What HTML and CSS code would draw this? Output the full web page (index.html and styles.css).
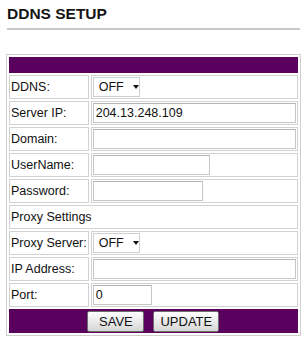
FILE: index.html
```html
<!DOCTYPE html>
<html>
<head>
<meta charset="utf-8">
<link rel="stylesheet" href="styles.css">
</head>
<body>
<div class="page">
  <h1 class="title">DDNS SETUP</h1>
  <table class="setup">
    <tr><td colspan="2" class="bar head"></td></tr>
    <tr>
      <td class="lbl">DDNS:</td>
      <td class="val"><div class="select">OFF<span class="arrow"></span></div></td>
    </tr>
    <tr>
      <td class="lbl">Server IP:</td>
      <td class="val"><div class="input full">204.13.248.109</div></td>
    </tr>
    <tr>
      <td class="lbl">Domain:</td>
      <td class="val"><div class="input full"></div></td>
    </tr>
    <tr>
      <td class="lbl">UserName:</td>
      <td class="val"><div class="input user"></div></td>
    </tr>
    <tr>
      <td class="lbl">Password:</td>
      <td class="val"><div class="input pass"></div></td>
    </tr>
    <tr>
      <td colspan="2" class="lbl section">Proxy Settings</td>
    </tr>
    <tr>
      <td class="lbl">Proxy Server:</td>
      <td class="val"><div class="select">OFF<span class="arrow"></span></div></td>
    </tr>
    <tr>
      <td class="lbl">IP Address:</td>
      <td class="val"><div class="input full"></div></td>
    </tr>
    <tr>
      <td class="lbl">Port:</td>
      <td class="val"><div class="input port">0</div></td>
    </tr>
    <tr>
      <td colspan="2" class="bar foot">
        <div class="buttons">
          <button class="btn save">SAVE</button>
          <button class="btn update">UPDATE</button>
        </div>
      </td>
    </tr>
  </table>
</div>
</body>
</html>
```

FILE: styles.css
```css
html, body {
  margin: 0;
  padding: 0;
  background: #ffffff;
}

.page {
  padding: 0 8px 0 6px;
  font-family: "Liberation Sans", Arial, sans-serif;
  color: #111;
}

.title {
  margin: 0 0 0 1px;
  padding: 7px 0 7px 0;
  font-size: 15.5px;
  font-weight: bold;
  line-height: 14px;
  color: #151515;
  border-bottom: 2px solid #c8c8c8;
}

.setup {
  margin-top: 24px;
  width: 293px;
  border: 1px solid #cfcfcf;
  border-spacing: 2px;
  font-size: 12.5px;
}

.setup td {
  box-sizing: border-box;
  border: 1px solid #d2d2d2;
  padding: 0 1px;
  height: 24px;
  vertical-align: middle;
}

.setup td.lbl {
  width: 80px;
  white-space: nowrap;
}

.setup td.bar {
  background: #5a005e;
  border-color: #5a005e;
}

.setup td.head {
  height: 16px;
}

.setup td.foot {
  height: 24px;
  padding: 0;
}

.setup td.section {
  width: auto;
}

.input {
  box-sizing: border-box;
  height: 20px;
  border: 1px solid #c6c6c6;
  border-top-color: #b4b4b4;
  line-height: 18px;
  padding: 0 2px;
  background: #fff;
}

.input.full { width: 203px; }
.input.user { width: 117px; }
.input.pass { width: 110px; }
.input.port { width: 59px; }

.select {
  box-sizing: border-box;
  width: 47px;
  height: 20px;
  border: 1px solid #cfcfcf;
  display: flex;
  align-items: center;
  padding-left: 5px;
  gap: 9px;
  background: #fff;
}

.arrow {
  width: 0;
  height: 0;
  border-left: 3px solid transparent;
  border-right: 3px solid transparent;
  border-top: 4px solid #111;
}

.buttons {
  display: flex;
  justify-content: center;
  gap: 9px;
}

.btn {
  box-sizing: border-box;
  height: 21px;
  padding: 0;
  font-family: "Liberation Sans", Arial, sans-serif;
  font-size: 13px;
  color: #111;
  border: 1px solid #6d6d6d;
  border-radius: 2px;
  background: linear-gradient(#ffffff, #e6e6e6 60%, #d6d6d6);
}

.btn.save { width: 57px; }
.btn.update { width: 66px; }
```
